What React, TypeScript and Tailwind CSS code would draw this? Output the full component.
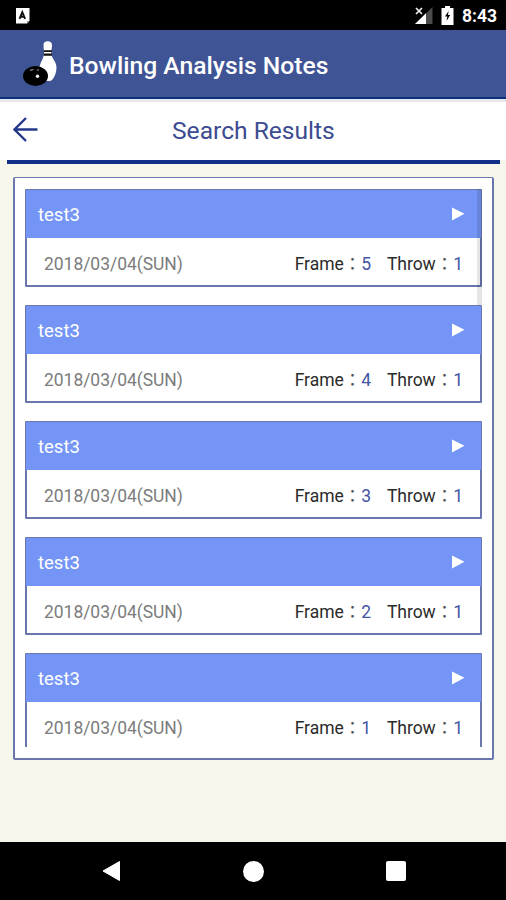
import type { ReactNode } from 'react';

interface SearchResult {
  id: number;
  title: string;
  date: string;
  frame: number;
  throwNo: number;
}

const results: SearchResult[] = [
  { id: 1, title: 'test3', date: '2018/03/04(SUN)', frame: 5, throwNo: 1 },
  { id: 2, title: 'test3', date: '2018/03/04(SUN)', frame: 4, throwNo: 1 },
  { id: 3, title: 'test3', date: '2018/03/04(SUN)', frame: 3, throwNo: 1 },
  { id: 4, title: 'test3', date: '2018/03/04(SUN)', frame: 2, throwNo: 1 },
  { id: 5, title: 'test3', date: '2018/03/04(SUN)', frame: 1, throwNo: 1 },
];

const BowlingLogo = () => (
  <svg width="36" height="48" viewBox="0 0 36 48" className="shrink-0">
    <path
      d="M20.500 5c0-2.400 1.500-3.700 4.200-3.700S29 2.600 29 5c0 3.500-.9 5-.6 9 .3 4.500 5.100 7.500 5.100 13.500 0 5-1.800 9.500-4.500 12.500-1.500 1.400-5.500 1.400-8 0-2.500-3-5-7-4.500-12 .4-5.500 4.200-9.500 4.500-14C21.200 10.500 20.500 8.500 20.500 5z"
      fill="#fff"
    />
    <path d="M20.700 10.300h8.300v1.800h-8.300zM20.700 13.400h8.300v2.400h-8.300z" fill="#111" />
    <ellipse cx="12.500" cy="36" rx="12.500" ry="10" fill="#000" />
    <path d="M7 30.300l3.500-.8M14 29.700l2 .6" stroke="#999" strokeWidth="1.200" />
    <circle cx="14.500" cy="36.300" r="1.700" fill="#eee" />
  </svg>
);

const StatusBar = () => (
  <div className="flex h-[30px] shrink-0 items-center justify-between bg-black pl-4 pr-[9px] pt-px">
    <svg width="14" height="16" viewBox="0 0 14 16">
      <path d="M0 0h13.500v12.500L11 15.500H0z" fill="#fff" />
      <path d="M3.500 10.800L6.300 4.200l2.800 6.600M5 8.700h2.800" fill="none" stroke="#111" strokeWidth="1.900" />
      <path d="M11 15.500v-2.500h2.500z" fill="#999" />
    </svg>
    <div className="flex items-center">
      <svg width="20" height="19" viewBox="0 0 20 19">
        <path d="M18.500 1v17H1z" fill="#4b4b4b" />
        <path d="M12 7.300V18H1z" fill="#fff" />
        <path d="M2 2l6 6M8 2L2 8" stroke="#eee" strokeWidth="1.700" />
      </svg>
      <svg width="13" height="19" viewBox="0 0 13 19" className="ml-[7px]">
        <path d="M4 0h5v2h3.500v17H.5V2H4z" fill="#fff" />
        <path d="M7.600 5L4 10.500h2.300l-.8 4.500 3.700-6H7z" fill="#000" />
      </svg>
      <span className="ml-2 pt-0.5 text-[17.500px] font-bold leading-none text-white">8:43</span>
    </div>
  </div>
);

const Label = ({ name, children }: { name: string; children: ReactNode }) => (
  <span className="flex items-baseline text-[#2b2b2b]">
    {name}
    <span className="text-[#555]">：</span>
    <span className="text-[#4355a3]">{children}</span>
  </span>
);

const ResultCard = ({ result }: { result: SearchResult }) => (
  <div className="h-[98px] shrink-0 rounded-[1px] border-2 border-t-[1px] border-[#6a77ae] bg-white">
    <div className="-mx-px flex h-[48px] items-center justify-between bg-[#7495f5] pl-3 pr-4 text-[18.500px] text-white">
      <span className="pt-1">{result.title}</span>
      <svg width="13" height="14" viewBox="0 0 13 14">
        <path d="M0 .5l12.500 6.300L0 13.500z" fill="#fff" />
      </svg>
    </div>
    <div className="flex h-[47px] items-center justify-between pl-[17px] pr-[17px] pt-1 text-[17.500px] tracking-[-0.04px]">
      <span className="pt-px text-[#7c7c7c]">{result.date}</span>
      <div className="flex gap-4 pt-px">
        <Label name="Frame">{result.frame}</Label>
        <Label name="Throw">{result.throwNo}</Label>
      </div>
    </div>
  </div>
);

const NavBar = () => (
  <div className="flex h-[58px] shrink-0 items-center justify-between bg-black pl-[102px] pr-[100px]">
    <svg width="19" height="22" viewBox="0 0 19 22">
      <path d="M17.500 1.500v19L1 11z" fill="#fff" stroke="#fff" strokeWidth="1" strokeLinejoin="round" />
    </svg>
    <div className="size-[21px] rounded-full bg-white" />
    <div className="size-5 rounded-[2px] bg-white" />
  </div>
);

export default function App() {
  return (
    <div className="flex h-[900px] w-[506px] flex-col overflow-hidden bg-[#f6f6ea] font-['Roboto','Noto_Sans_CJK_JP',sans-serif]">
      <StatusBar />
      <header className="flex h-[69px] shrink-0 items-center border-b-2 border-[#0d2f7c] bg-[#3f5495] pl-[23px] text-white">
        <BowlingLogo />
        <h1 className="ml-[10px] pt-[5px] text-[24.700px] font-medium">Bowling Analysis Notes</h1>
      </header>
      <div className="flex h-[61px] shrink-0 items-center border-t-[3px] border-[#e8e7ef] bg-white pb-1 pl-[13px]">
        <svg width="26" height="26" viewBox="0 0 26 26" fill="none" stroke="#24378a" strokeWidth="2.400">
          <path d="M13 2L1.500 13.500 13 25M2 13.500h22.500" />
        </svg>
        <h2 className="ml-[133px] pt-1 text-[24.600px] text-[#3b4c92]">Search Results</h2>
      </div>
      <div className="ml-[7px] mr-[6px] h-1 shrink-0 bg-[#102f86]" />
      <main className="flex-1 pl-[13px] pr-3 pt-[13px]">
        <div className="h-[583px] rounded-[2px] border-2 border-t-[1px] border-[#6a77ae] bg-white px-[10px] pt-[11px]">
          <div className="relative flex h-[558px] flex-col gap-[18px] overflow-hidden">
            {results.map((result) => (
              <ResultCard key={result.id} result={result} />
            ))}
            <div className="absolute right-0 top-0 h-[116px] w-[5px] bg-black/10" />
          </div>
        </div>
      </main>
      <NavBar />
    </div>
  );
}
